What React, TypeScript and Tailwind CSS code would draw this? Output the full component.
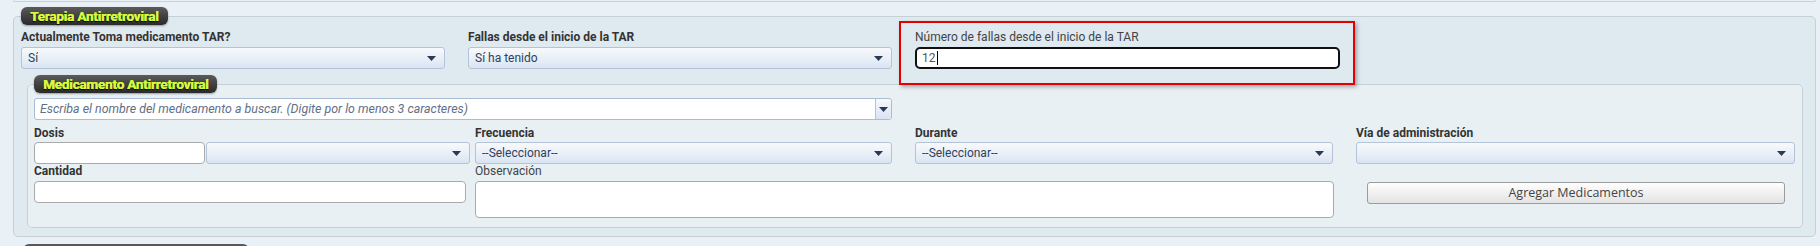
import React from "react";

function Arrow() {
  return (
    <svg width="9" height="5" viewBox="0 0 9 5" className="shrink-0">
      <path d="M0 0 H9 L4.5 5 Z" fill="#2a3a55" />
    </svg>
  );
}

function Select({ value, className = "" }: { value?: string; className?: string }) {
  return (
    <div
      className={`h-[22px] flex items-center justify-between pl-[6px] pr-[8px] border border-[#b4c4d8] rounded-[3px] bg-gradient-to-b from-[#f7f9fc] via-[#eaf0f8] to-[#d9e4f2] text-[12px] text-[#2f3f5c] ${className}`}
    >
      <span className="truncate">{value}</span>
      <Arrow />
    </div>
  );
}

function Label({ children, bold = true }: { children: React.ReactNode; bold?: boolean }) {
  return (
    <div className={`h-[15px] leading-[15px] text-[12px] text-[#333] whitespace-nowrap ${bold ? "font-bold" : ""}`}>
      {children}
    </div>
  );
}

function Legend({ children }: { children: React.ReactNode }) {
  return (
    <legend className="h-[18px] px-[9px] rounded-[6px] bg-gradient-to-b from-[#5b5b5b] to-[#2a2a2a] shadow-[0_1px_2px_rgba(0,0,0,0.35)] text-[13.5px] leading-[18px] font-bold tracking-[-0.2px] text-[#d8f83c] [text-shadow:0.4px_0_0_#d8f83c,0_1px_1px_#000]">
      {children}
    </legend>
  );
}

export default function App() {
  return (
    <div className="w-[1820px] h-[246px] overflow-hidden bg-[#e9f0f6] font-['Roboto',sans-serif]">
      <div className="ml-[13px] w-[1803px] h-[2px] border-b border-x border-[#c9d1d8] rounded-b-[4px]" />

      <fieldset className="mt-[5px] ml-[13px] w-[1803px] border border-[#c8d0d7] rounded-[5px] bg-[#dfe9f0] pl-[7px] pr-[7px] pb-[8px]">
        <Legend>Terapia Antirretroviral</Legend>

        <div className="grid grid-cols-[447px_447px_447px] mt-[5px]">
          <div>
            <Label>Actualmente Toma medicamento TAR?</Label>
            <Select value="Sí" className="mt-[2px] w-[424px]" />
          </div>
          <div>
            <Label>Fallas desde el inicio de la TAR</Label>
            <Select value="Sí ha tenido" className="mt-[2px] w-[424px]" />
          </div>
          <div className="relative">
            <Label bold={false}>
              <span className="text-[#444]">Número de fallas desde el inicio de la TAR</span>
            </Label>
            <div className="mt-[2px] w-[425px] h-[22px] border-2 border-[#111] rounded-[5px] bg-white flex items-center pl-[5px] text-[12px] text-[#555]">
              12
              <span className="ml-[1px] w-[1px] h-[14px] bg-black" />
            </div>
            <div className="absolute left-[-16px] top-[-9px] w-[456px] h-[64px] border-2 border-[#e50000] shadow-[2px_2px_4px_rgba(0,0,0,0.3)] pointer-events-none" />
          </div>
        </div>

        <fieldset className="mt-[6px] ml-[6px] w-[1776px] border border-[#c8d0d7] rounded-[5px] bg-[#e8f0f4] pl-[6px] pb-[9px]">
          <Legend>Medicamento Antirretroviral</Legend>

          <div className="mt-[5px] w-[858px] h-[22px] flex border border-[#a9bdd6] rounded-[3px] bg-white">
            <div className="flex-1 pl-[5px] flex items-center text-[12.4px] italic text-[#5f6f88] whitespace-nowrap">
              Escriba el nombre del medicamento a buscar. (Digite por lo menos 3 caracteres)
            </div>
            <div className="w-[16px] border-l border-[#b4c4d8] bg-gradient-to-b from-[#f7f9fc] to-[#d9e4f2] flex items-center justify-center rounded-r-[3px]">
              <Arrow />
            </div>
          </div>

          <div className="grid grid-cols-[441px_440px_441px_439px] mt-[6px]">
            <div>
              <Label>Dosis</Label>
              <div className="mt-[1px] flex">
                <div className="w-[171px] h-[22px] bg-white border border-[#aaa] rounded-[4px]" />
                <Select className="ml-[1px] w-[264px]" />
              </div>
            </div>
            <div>
              <Label>Frecuencia</Label>
              <Select value="--Seleccionar--" className="mt-[1px] w-[417px]" />
            </div>
            <div>
              <Label>Durante</Label>
              <Select value="--Seleccionar--" className="mt-[1px] w-[418px]" />
            </div>
            <div>
              <Label>Vía de administración</Label>
              <Select className="mt-[1px] w-[439px]" />
            </div>

            <div>
              <Label>Cantidad</Label>
              <div className="mt-[2px] w-[432px] h-[22px] bg-white border border-[#aaa] rounded-[4px]" />
            </div>
            <div className="col-span-2">
              <Label bold={false}>
                <span className="text-[#444]">Observación</span>
              </Label>
              <div className="mt-[2px] w-[859px] h-[37px] bg-white border border-[#aaa] rounded-[4px]" />
            </div>
            <div className="pt-[16px] pl-[11px]">
              <button className="w-[418px] h-[22px] border border-[#9c9c9c] rounded-[3px] bg-gradient-to-b from-[#fefefe] to-[#e3e3e3] text-[12.5px] text-[#444] font-['Open_Sans',sans-serif]">
                Agregar Medicamentos
              </button>
            </div>
          </div>
        </fieldset>
      </fieldset>

      <div className="mt-[7px] ml-[23px] w-[226px] h-[18px] rounded-[6px] bg-gradient-to-b from-[#5b5b5b] to-[#2a2a2a]" />
    </div>
  );
}
